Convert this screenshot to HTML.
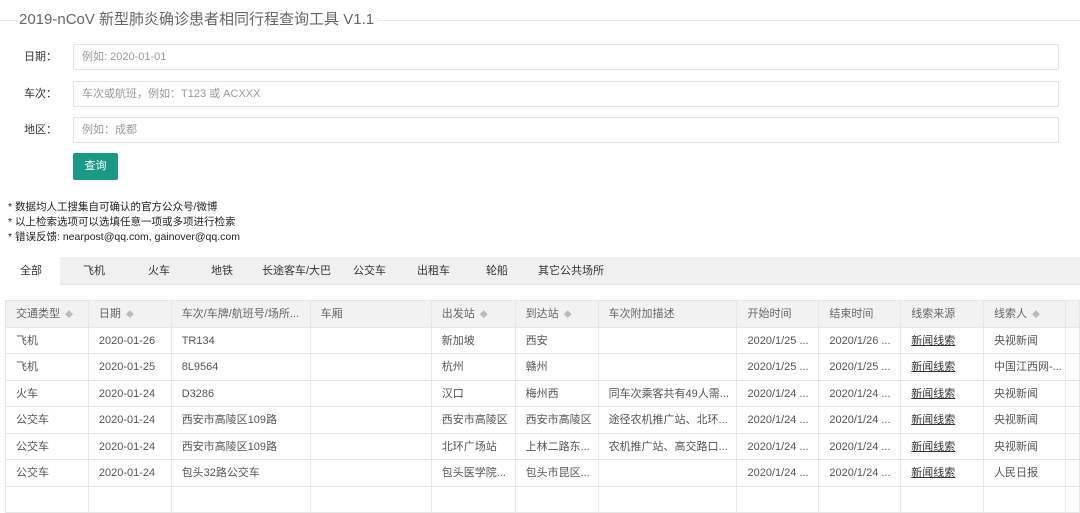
<!DOCTYPE html>
<html><head><meta charset="utf-8"><style>
*{margin:0;padding:0;box-sizing:border-box}
body{width:1080px;height:490px;overflow:hidden;background:#fff;font-family:"Liberation Sans","Noto Sans CJK SC",sans-serif;color:#555;position:relative}
.abs{position:absolute}
.title{left:19px;top:10px;font-size:15px;color:#666;white-space:nowrap;background:#fff;padding:0 4px 0 0;line-height:20px}
.lbl{left:0;width:57px;text-align:right;font-size:11px;color:#333;line-height:14px}
.inp{left:73px;width:986px;height:26px;border:1px solid #e3e3e3;border-radius:2px;font-size:11px;color:#999;padding-left:8px;line-height:24px}
.btn{left:73px;top:153px;width:45px;height:27px;background:#1a9a86;border-radius:2px;color:#fff;font-size:11px;text-align:center;line-height:27px}
.note{left:8px;font-size:10.5px;color:#222;white-space:nowrap;line-height:14px}
.tabs{left:0;top:257px;width:1080px;height:28px;background:#f0f0f0;border-bottom:1px solid #e6e6e6}
.tab{top:0;font-size:11px;color:#333;line-height:28px;white-space:nowrap}
table{position:absolute;left:5px;top:300px;border-collapse:collapse;font-size:11px;table-layout:fixed}
tr{height:26.5px}
td,th{border:1px solid #e6e6e6;height:26.5px;line-height:14px;padding:1px 0 0 10px;white-space:nowrap;overflow:hidden;font-weight:normal;text-align:left;color:#555;vertical-align:middle}
th{background:#f2f2f2;color:#666}
.s{color:#bbb;font-size:8px;margin-left:5px}
u{color:#333}
</style></head><body>
<div class="abs" style="left:0;top:20px;width:1080px;height:1px;background:#e6e6e6"></div>
<div class="abs title">2019-nCoV 新型肺炎确诊患者相同行程查询工具 V1.1</div>
<div class="abs lbl" style="top:50px">日期：</div>
<div class="abs inp" style="top:44px">例如: 2020-01-01</div>
<div class="abs lbl" style="top:87px">车次：</div>
<div class="abs inp" style="top:81px">车次或航班，例如：T123 或 ACXXX</div>
<div class="abs lbl" style="top:123px">地区：</div>
<div class="abs inp" style="top:117px">例如：成都</div>
<div class="abs btn">查询</div>
<div class="abs note" style="top:200px">* 数据均人工搜集自可确认的官方公众号/微博</div>
<div class="abs note" style="top:215px">* 以上检索选项可以选填任意一项或多项进行检索</div>
<div class="abs note" style="top:230px">* 错误反馈: nearpost@qq.com, gainover@qq.com</div>
<div class="abs tabs">
<div class="abs" style="left:0;top:0;width:60px;height:29px;background:#fff"></div>
<div class="abs tab" style="left:20px">全部</div>
<div class="abs tab" style="left:83px">飞机</div>
<div class="abs tab" style="left:148px">火车</div>
<div class="abs tab" style="left:211px">地铁</div>
<div class="abs tab" style="left:262px">长途客车/大巴</div>
<div class="abs tab" style="left:353px">公交车</div>
<div class="abs tab" style="left:417px">出租车</div>
<div class="abs tab" style="left:486px">轮船</div>
<div class="abs tab" style="left:538px">其它公共场所</div>
</div>
<table>
<colgroup><col style="width:83px"><col style="width:83px"><col style="width:139px"><col style="width:122px"><col style="width:84px"><col style="width:83px"><col style="width:139px"><col style="width:82px"><col style="width:82px"><col style="width:83px"><col style="width:82px"><col style="width:14px"></colgroup>
<tr><th>交通类型<span class="s">◆</span></th><th>日期<span class="s">◆</span></th><th>车次/车牌/航班号/场所...</th><th>车厢</th><th>出发站<span class="s">◆</span></th><th>到达站<span class="s">◆</span></th><th>车次附加描述</th><th>开始时间</th><th>结束时间</th><th>线索来源</th><th>线索人<span class="s">◆</span></th><th></th></tr>
<tr><td>飞机</td><td>2020-01-26</td><td>TR134</td><td></td><td>新加坡</td><td>西安</td><td></td><td>2020/1/25 ...</td><td>2020/1/26 ...</td><td><u>新闻线索</u></td><td>央视新闻</td><td></td></tr>
<tr><td>飞机</td><td>2020-01-25</td><td>8L9564</td><td></td><td>杭州</td><td>赣州</td><td></td><td>2020/1/25 ...</td><td>2020/1/25 ...</td><td><u>新闻线索</u></td><td>中国江西网-...</td><td></td></tr>
<tr><td>火车</td><td>2020-01-24</td><td>D3286</td><td></td><td>汉口</td><td>梅州西</td><td>同车次乘客共有49人需...</td><td>2020/1/24 ...</td><td>2020/1/24 ...</td><td><u>新闻线索</u></td><td>央视新闻</td><td></td></tr>
<tr><td>公交车</td><td>2020-01-24</td><td>西安市高陵区109路</td><td></td><td>西安市高陵区</td><td>西安市高陵区</td><td>途径农机推广站、北环...</td><td>2020/1/24 ...</td><td>2020/1/24 ...</td><td><u>新闻线索</u></td><td>央视新闻</td><td></td></tr>
<tr><td>公交车</td><td>2020-01-24</td><td>西安市高陵区109路</td><td></td><td>北环广场站</td><td>上林二路东...</td><td>农机推广站、高交路口...</td><td>2020/1/24 ...</td><td>2020/1/24 ...</td><td><u>新闻线索</u></td><td>央视新闻</td><td></td></tr>
<tr><td>公交车</td><td>2020-01-24</td><td>包头32路公交车</td><td></td><td>包头医学院...</td><td>包头市昆区...</td><td></td><td>2020/1/24 ...</td><td>2020/1/24 ...</td><td><u>新闻线索</u></td><td>人民日报</td><td></td></tr>
<tr><td>&nbsp;</td><td></td><td></td><td></td><td></td><td></td><td></td><td></td><td></td><td></td><td></td><td></td></tr>
</table>
</body></html>
